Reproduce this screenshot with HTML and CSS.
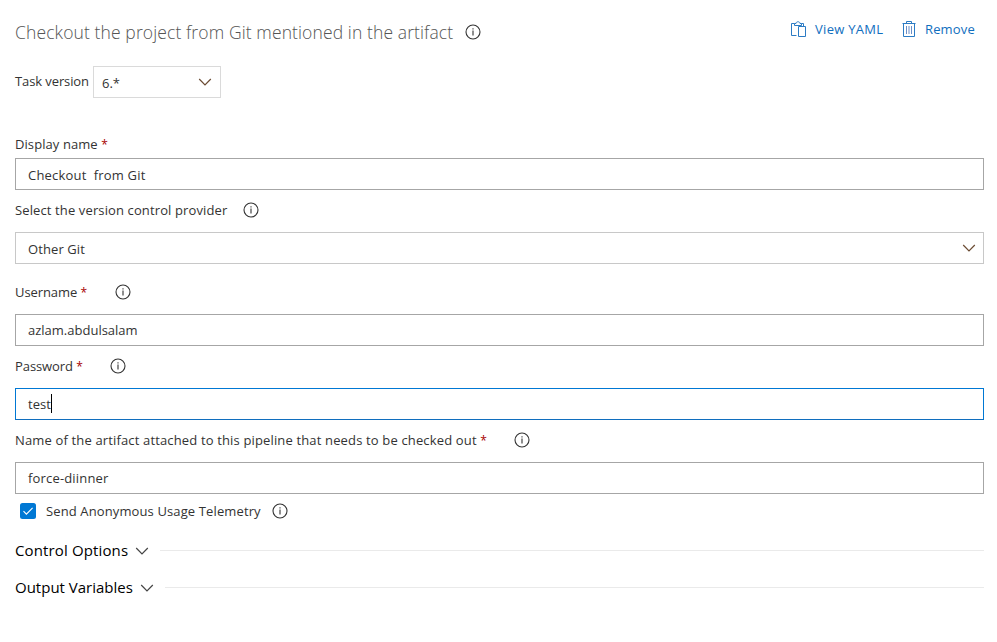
FILE: index.html
```
<!DOCTYPE html>
<html lang="en">
<head>
<meta charset="utf-8">
<title>Checkout the project from Git</title>
<link rel="stylesheet" href="styles.css">
</head>
<body>
<svg class="defs" width="0" height="0">
  <symbol id="info" viewBox="0 0 16 16"><circle cx="8" cy="8" r="7" fill="none" stroke="currentColor" stroke-width="1.1"/><path d="M8 6.5V11.5M8 4.3V5.6" fill="none" stroke="currentColor" stroke-width="1.1"/></symbol>
  <symbol id="chevron" viewBox="0 0 14 8"><path d="M1.2 1L7 6.8L12.8 1" fill="none" stroke="currentColor" stroke-width="1.2"/></symbol>
</svg>
<main class="task">
  <header class="header">
    <h1 class="title"><span class="title-text">Checkout the project from Git mentioned in the artifact</span><svg class="info"><use href="#info"/></svg></h1>
    <nav class="actions">
      <a class="action"><svg class="action-icon" viewBox="0 0 16 16"><path d="M5.5 14.5H.5V2.5H3.5M10.5 2.5H12.5V5M3.5 4.5V2.5H5C5 .2 9 .2 9 2.5H10.5V4.5ZM7.5 5.5H14.5V15.5H7.5Z"/></svg><span class="yaml">View YAML</span></a>
      <a class="action"><svg class="action-icon" viewBox="0 0 16 16"><path d="M1.5 2.5H14.5M5.5 2.5V.5H10.5V2.5M2.5 2.5V15.5H13.5V2.5"/><path class="slats" d="M5.5 5V13M8 5V13M10.5 5V13"/></svg><span class="remove">Remove</span></a>
    </nav>
  </header>
  <div class="version"><span class="version-label">Task version</span><div class="select small"><span>6.*</span><svg class="chevron"><use href="#chevron"/></svg></div></div>

  <div class="label first"><span class="t-display">Display name <b>*</b></span></div>
  <div class="field"><span class="v-display">Checkout&nbsp; from Git</span></div>
  <div class="label"><span class="t-provider">Select the version control provider</span><svg class="info"><use href="#info"/></svg></div>
  <div class="field select"><span class="v-provider">Other Git</span><svg class="chevron"><use href="#chevron"/></svg></div>
  <div class="label spaced"><span class="t-user">Username <b>*</b></span><svg class="info"><use href="#info"/></svg></div>
  <div class="field raised"><span class="v-user">azlam.abdulsalam</span></div>
  <div class="label"><span class="t-pass">Password <b>*</b></span><svg class="info"><use href="#info"/></svg></div>
  <div class="field raised focused"><span class="v-pass">test</span><i class="caret"></i></div>
  <div class="label"><span class="t-artifact">Name of the artifact attached to this pipeline that needs to be checked out <b>*</b></span><svg class="info"><use href="#info"/></svg></div>
  <div class="field raised"><span class="v-artifact">force-diinner</span></div>
  <div class="check"><svg class="box" viewBox="0 0 16 16"><rect width="16" height="16" rx="2.5" fill="#0078d4"/><path d="M3.5 8.2L6.4 11.1L12.6 4.9" fill="none" stroke="#fff" stroke-width="1.1"/></svg><span class="t-telemetry">Send Anonymous Usage Telemetry</span><svg class="info"><use href="#info"/></svg></div>
  <section class="group"><span class="t-control">Control Options</span><svg class="chevron"><use href="#chevron"/></svg><i class="rule"></i></section>
  <section class="group second"><span class="t-output">Output Variables</span><svg class="chevron"><use href="#chevron"/></svg><i class="rule"></i></section>
</main>
</body>
</html>
```
FILE: styles.css
```
* { box-sizing: border-box; }
body { margin: 0; background: #fff; color: #333; font: 13px/20px "Open Sans", "Noto Sans", sans-serif; }
.defs { position: absolute; }
.task { padding: 0 13px 0 15px; }
span { white-space: pre; flex: none; }
svg { display: block; flex: none; }
.header { display: flex; justify-content: space-between; height: 64px; }
.title { display: flex; align-items: center; margin: 0; font-size: 17.5px; font-weight: 300; color: #555; letter-spacing: .11px; }
.title-text { width: 450px; padding-bottom: 1px; }
.info { width: 16px; height: 16px; color: #333; }
.actions { display: flex; height: 58px; align-items: center; color: #106ebe; }
.action { display: flex; align-items: center; }
.action-icon { width: 16px; height: 16px; margin-right: 8px; fill: none; stroke: #2b7bc4; stroke-width: 1; }
.slats { stroke: #6a8fc8; }
.yaml { width: 86px; letter-spacing: .3px; }
.remove { width: 59px; letter-spacing: .15px; }
.version { display: flex; align-items: center; height: 32px; margin-top: 2px; }
.version-label { width: 78px; padding-bottom: 2px; letter-spacing: -.1px; }
.select { display: flex; align-items: center; justify-content: space-between; border: 1px solid #c8c8c8; }
.small { width: 128px; height: 32px; padding: 1px 8px 0; border-color: #dadada; }
.chevron { width: 14px; height: 8px; color: #444; }
.select .chevron { margin-top: -2px; color: #6b4b32; }
.label { display: flex; align-items: center; height: 20px; margin: 10px 0 12px; }
.label.first { margin: 36px 0 4px; }
.label.spaced { margin-top: 18px; }
b { color: #a80000; font-size: 12px; font-weight: 400; }
.field { display: flex; align-items: center; height: 32px; padding: 1px 7px 0 12px; border: 1px solid #a6a6a6; }
.field.raised { padding: 0 7px 1px 12px; }
.field.select { border-color: #c8c8c8; }
.field.focused { border-color: #0078d4; border-bottom-color: #106ebe; }
.caret { width: 1px; height: 19px; background: #000; }
.t-display { letter-spacing: .08px; }
.v-display { letter-spacing: .2px; }
.t-provider { width: 228px; letter-spacing: .12px; }
.v-provider { letter-spacing: .1px; }
.t-user { width: 100px; letter-spacing: -.08px; }
.t-pass { width: 95px; letter-spacing: -.08px; }
.t-artifact { width: 499px; letter-spacing: .15px; }
.v-pass { width: 23px; }
.v-artifact { letter-spacing: .17px; }
.check { display: flex; align-items: center; height: 20px; margin-top: 7px; padding-left: 5px; }
.box { width: 16px; height: 16px; margin-right: 10px; }
.t-telemetry { width: 226px; letter-spacing: .12px; }
.group { display: flex; align-items: center; height: 21px; margin-top: 19px; font-size: 15px; color: #000; }
.group span { padding-bottom: 2px; }
.group.second { margin-top: 16px; }
.t-control { width: 120px; letter-spacing: .13px; }
.t-output { width: 125px; }
.rule { flex: 1; height: 1px; margin-left: 11px; background: #eaeaea; }
```
